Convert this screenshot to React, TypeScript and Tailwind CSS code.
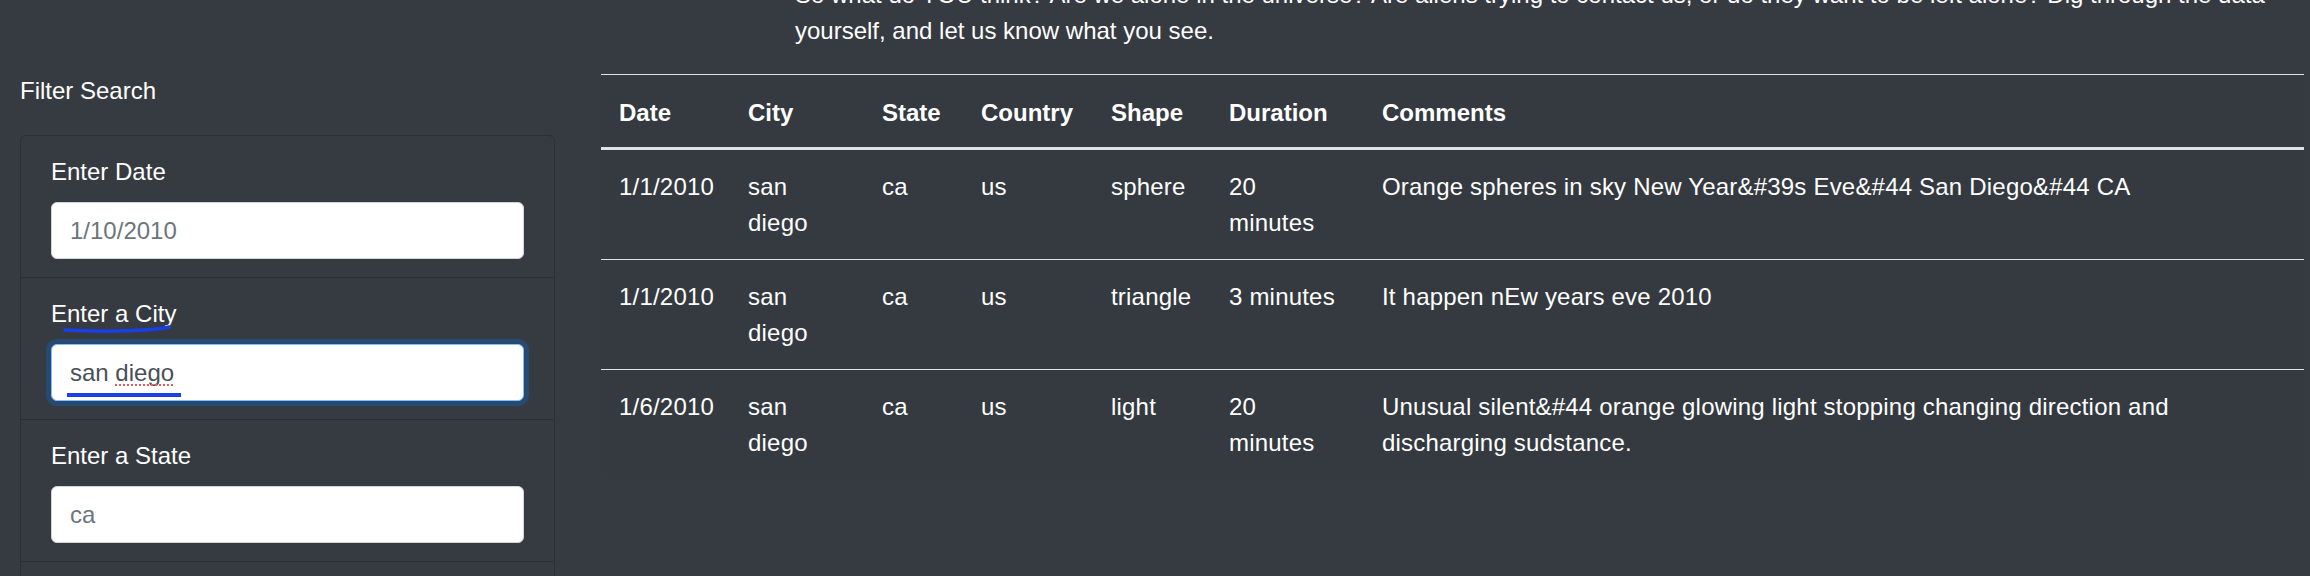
const sightings = [
  {
    date: "1/1/2010",
    city: "san diego",
    state: "ca",
    country: "us",
    shape: "sphere",
    duration: "20 minutes",
    comments: "Orange spheres in sky New Year&#39s Eve&#44 San Diego&#44 CA",
  },
  {
    date: "1/1/2010",
    city: "san diego",
    state: "ca",
    country: "us",
    shape: "triangle",
    duration: "3 minutes",
    comments: "It happen nEw years eve 2010",
  },
  {
    date: "1/6/2010",
    city: "san diego",
    state: "ca",
    country: "us",
    shape: "light",
    duration: "20 minutes",
    comments:
      "Unusual silent&#44 orange glowing light stopping changing direction and discharging sudstance.",
  },
];

const headers = ["Date", "City", "State", "Country", "Shape", "Duration", "Comments"];

const FilterItem = ({
  label,
  placeholder,
  value,
  focused,
  first,
}: {
  label: string;
  placeholder: string;
  value?: string;
  focused?: boolean;
  first?: boolean;
}) => (
  <li
    className={`px-[30px] pt-[18px] pb-[18px] ${first ? "" : "border-t border-[#2b3035]"}`}
  >
    <div className="relative mb-[12px] leading-[36px]">
      <label>{label}</label>
      {focused && (
        <svg
          className="absolute left-[12px] top-[28px]"
          width="110"
          height="10"
          viewBox="0 0 110 10"
        >
          <path
            d="M2 6 Q 40 8 70 6.5 T 106 3"
            fill="none"
            stroke="#1a3fe6"
            strokeWidth="3.5"
            strokeLinecap="round"
          />
        </svg>
      )}
    </div>
    <div className="relative">
      <input
        type="text"
        placeholder={placeholder}
        defaultValue={value}
        className={`block h-[57px] w-full rounded-[6px] border bg-white px-[18px] text-[24px] text-[#495057] outline-none placeholder:text-[#6c757d] ${
          focused
            ? "border-[#80bdff] shadow-[0_0_0_5px_rgba(0,123,255,0.25)]"
            : "border-[#ced4da]"
        }`}
      />
      {focused && (
        <>
          <span className="absolute left-[64px] top-[40px] h-0 w-[58px] border-b-2 border-dotted border-[#e35d5d]" />
          <span className="absolute left-[16px] top-[49px] h-[4px] w-[114px] bg-[#1a3fe6]" />
        </>
      )}
    </div>
  </li>
);

export default function App() {
  return (
    <div className="h-[576px] w-[2310px] overflow-hidden bg-[#363a41] font-['Liberation_Sans',Arial,sans-serif] text-[24px] leading-[36px] text-white">
      <div className="-mt-[23px]">
        <div className="ml-[795px] mb-[24px] whitespace-nowrap">
          <div>
            So what do YOU think? Are we alone in the universe? Are aliens trying to contact us, or
            do they want to be left alone? Dig through the data
          </div>
          <div>yourself, and let us know what you see.</div>
        </div>

        <div className="flex">
          <aside className="w-[555px] shrink-0 pl-[20px]">
            <p className="mb-[26px]">Filter Search</p>
            <ul className="rounded-[6px] border border-[#2b3035]">
              <FilterItem label="Enter Date" placeholder="1/10/2010" first />
              <FilterItem label="Enter a City" placeholder="" value="san diego" focused />
              <FilterItem label="Enter a State" placeholder="ca" />
              <FilterItem label="Enter a Country" placeholder="us" />
            </ul>
          </aside>

          <div className="ml-[46px] mt-[1px] w-[1703px] shrink-0">
            <table className="w-full table-fixed border-collapse bg-[#343a40] text-left tracking-[0.2px]">
              <colgroup>
                <col className="w-[129px]" />
                <col className="w-[134px]" />
                <col className="w-[99px]" />
                <col className="w-[130px]" />
                <col className="w-[118px]" />
                <col className="w-[153px]" />
                <col />
              </colgroup>
              <thead>
                <tr>
                  {headers.map((h) => (
                    <th
                      key={h}
                      className="border-t border-b-[3px] border-t-[#dee2e6] border-b-[#dee2e6] px-[18px] pt-[20px] pb-[16px] align-bottom font-bold tracking-normal"
                    >
                      {h}
                    </th>
                  ))}
                </tr>
              </thead>
              <tbody>
                {sightings.map((s, i) => (
                  <tr key={i}>
                    {[s.date, s.city, s.state, s.country, s.shape, s.duration, s.comments].map(
                      (v, j) => (
                        <td
                          key={j}
                          className={`px-[18px] pt-[19px] pb-[18px] align-top ${
                            i > 0 ? "border-t border-[#dee2e6]" : ""
                          }`}
                        >
                          {v}
                        </td>
                      )
                    )}
                  </tr>
                ))}
              </tbody>
            </table>
          </div>
        </div>
      </div>
    </div>
  );
}
